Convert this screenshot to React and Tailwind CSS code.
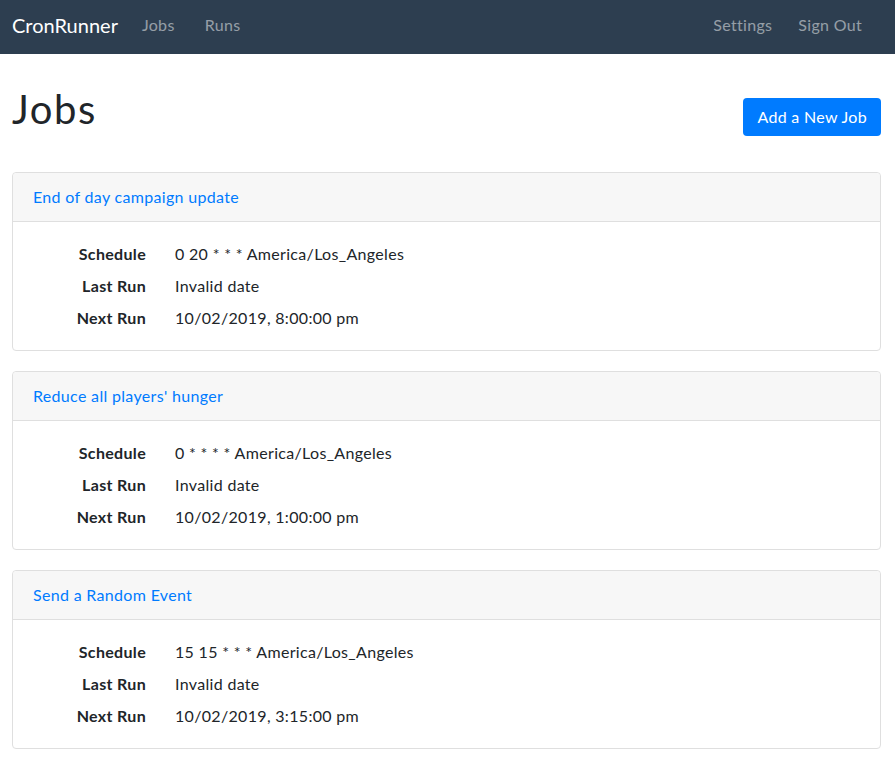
import React from "react";

const jobs = [
  { name: "End of day campaign update", schedule: "0 20 * * * America/Los_Angeles", last: "Invalid date", next: "10/02/2019, 8:00:00 pm" },
  { name: "Reduce all players' hunger", schedule: "0 * * * * America/Los_Angeles", last: "Invalid date", next: "10/02/2019, 1:00:00 pm" },
  { name: "Send a Random Event", schedule: "15 15 * * * America/Los_Angeles", last: "Invalid date", next: "10/02/2019, 3:15:00 pm" },
];

function JobCard({ job }) {
  return (
    <div className="w-[869px] border border-[#dfdfdf] rounded-[4px] bg-white">
      <div className="bg-[#f7f7f7] border-b border-[#dfdfdf] rounded-t-[4px] px-5 h-[49px] flex items-center">
        <a href="#" className="text-[#007bff] text-[16px] leading-6">{job.name}</a>
      </div>
      <div className="px-4 py-4">
        <div className="grid grid-cols-[117px_1fr] gap-x-[29px] text-[16px] text-[#212529]">
          {[["Schedule", job.schedule], ["Last Run", job.last], ["Next Run", job.next]].map(([k, v]) => (
            <React.Fragment key={k}>
              <div className="text-right font-bold h-8 flex items-center justify-end">{k}</div>
              <div className="h-8 flex items-center">{v}</div>
            </React.Fragment>
          ))}
        </div>
      </div>
    </div>
  );
}

export default function App() {
  return (
    <div className="min-h-[766px] bg-white tracking-[0.02em]" style={{ fontFamily: "Lato, 'Noto Sans', sans-serif" }}>
      <nav className="bg-[#2d3e50] h-[54px] flex items-center pl-3 pr-[25px] pb-[4px]">
        <span className="text-white text-[20px] mr-[16px] tracking-normal">CronRunner</span>
        <a href="#" className="text-white/50 text-[16px] px-2">Jobs</a>
        <a href="#" className="text-white/50 text-[16px] px-2 ml-[14px]">Runs</a>
        <div className="ml-auto flex gap-[10px]">
          <a href="#" className="text-white/50 text-[16px] px-2">Settings</a>
          <a href="#" className="text-white/50 text-[16px] px-2">Sign Out</a>
        </div>
      </nav>
      <main className="pl-3 w-[881px]">
        <div className="flex items-start justify-between mt-[31px]">
          <h1 className="text-[40px] leading-[48px] text-[#212529] tracking-[0.04em]">Jobs</h1>
          <button className="bg-[#007bff] text-white text-[16px] rounded-[4px] h-[38px] px-[14px] mt-[13px]">Add a New Job</button>
        </div>
        <div className="flex flex-col gap-[20px] mt-[36px]">
          {jobs.map((j) => <JobCard key={j.name} job={j} />)}
        </div>
      </main>
    </div>
  );
}
